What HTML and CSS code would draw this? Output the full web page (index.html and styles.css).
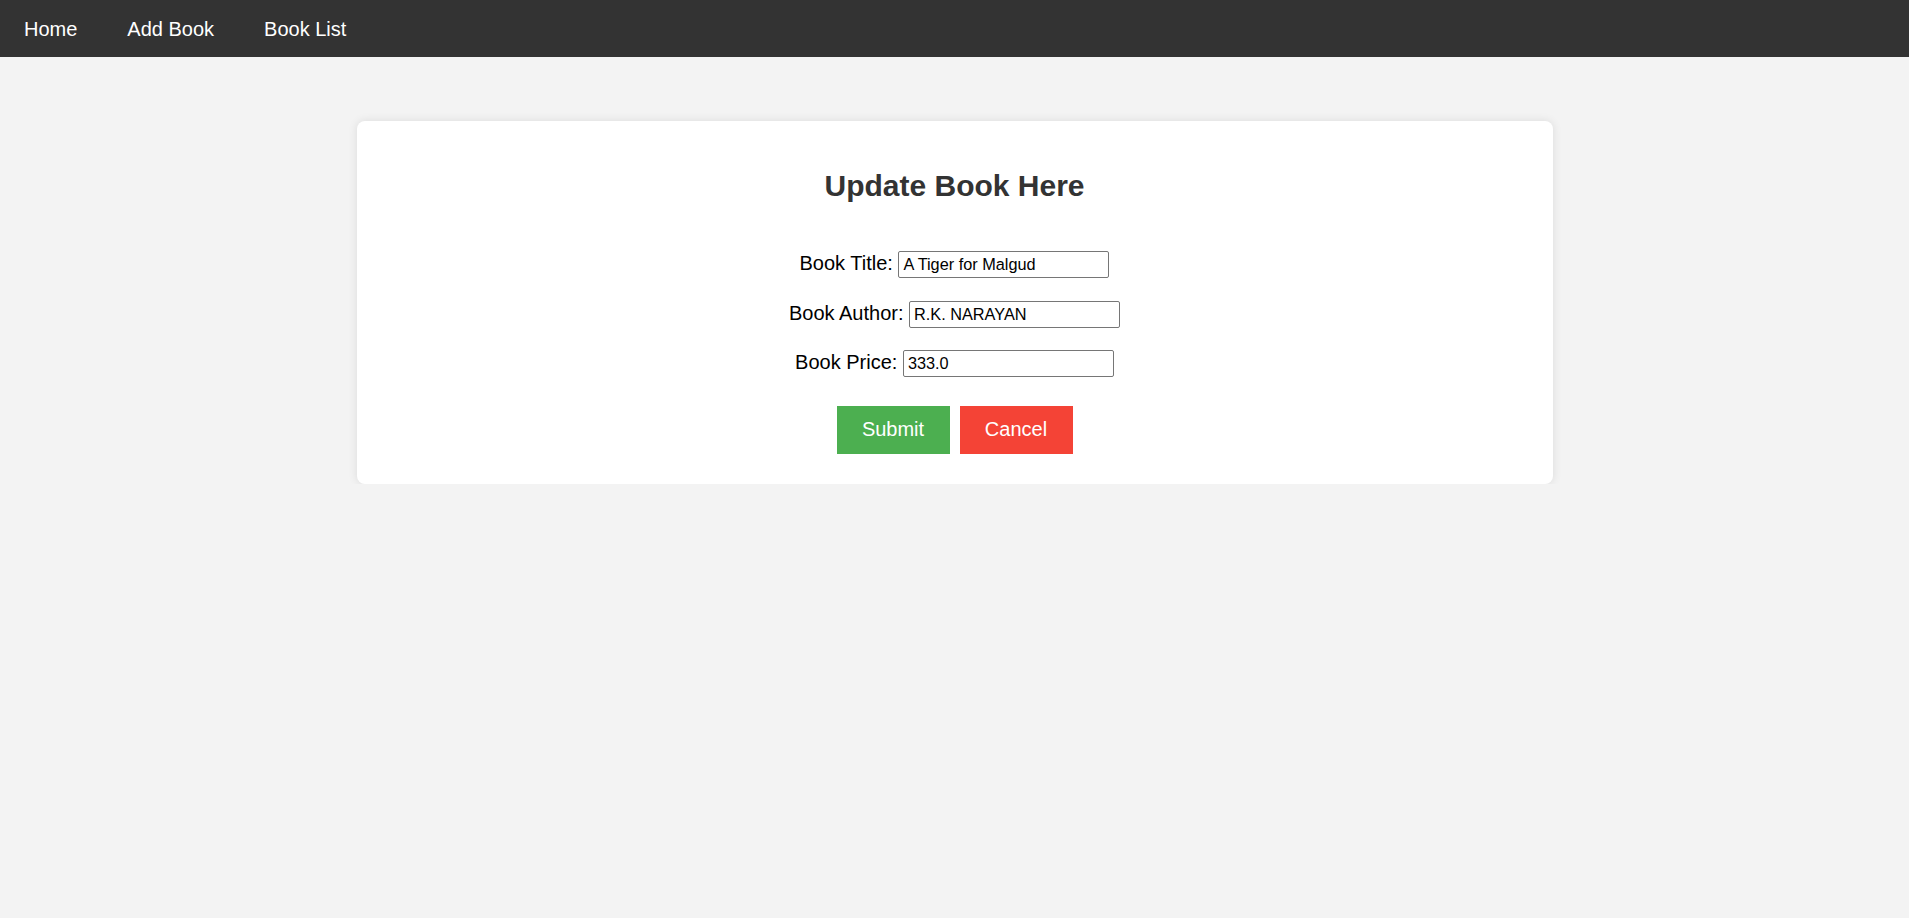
FILE: index.html
```html
<!DOCTYPE html>
<html>
<head>
<meta charset="utf-8">
<title>Update Book</title>
<link rel="stylesheet" href="styles.css">
</head>
<body>
<nav class="nav">
  <a href="#" class="nav-link">Home</a>
  <a href="#" class="nav-link">Add Book</a>
  <a href="#" class="nav-link">Book List</a>
</nav>
<main class="card">
  <h2 class="card-title">Update Book Here</h2>
  <form class="form">
    <div class="form-row"><label class="form-label">Book Title:</label> <input class="form-input" type="text" value="A Tiger for Malgud"></div>
    <div class="form-row"><label class="form-label">Book Author:</label> <input class="form-input" type="text" value="R.K. NARAYAN"></div>
    <div class="form-row"><label class="form-label">Book Price:</label> <input class="form-input" type="text" value="333.0"></div>
    <div class="form-actions">
      <button type="button" class="btn btn-submit">Submit</button>
      <button type="button" class="btn btn-cancel">Cancel</button>
    </div>
  </form>
</main>
</body>
</html>
```
FILE: styles.css
```css
body {
  margin: 0;
  background: #f3f3f3;
  font-family: "Liberation Sans", Arial, sans-serif;
}

.nav {
  background: #333333;
  height: 57px;
  box-sizing: border-box;
  padding-top: 2px;
  display: flex;
  align-items: center;
  gap: 50px;
  padding-left: 24px;
}

.nav-link {
  color: #ffffff;
  text-decoration: none;
  font-size: 20px;
  line-height: 23px;
}

.card {
  display: block;
  width: 1196px;
  box-sizing: border-box;
  margin: 64px auto 0;
  background: #ffffff;
  border-radius: 8px;
  box-shadow: 0 0 10px rgba(0, 0, 0, 0.1);
  padding: 48px 20px 30px;
  text-align: center;
}

.card-title {
  margin: 0 0 48px;
  font-size: 30px;
  font-weight: bold;
  line-height: 34px;
  color: #333333;
}

.form {
  margin: 0;
}

.form-row {
  font-size: 20px;
  line-height: 23px;
  color: #000000;
  margin-bottom: 23.3px;
  height: 26.4px;
}

.form-label {
  font-size: 20px;
}

.form-input {
  font-family: "Liberation Sans", Arial, sans-serif;
  font-size: 16.3px;
  width: 211px;
  box-sizing: border-box;
  padding: 3px 4px;
  border: 1px solid #767676;
  border-radius: 2px;
  color: #000000;
  background: #ffffff;
  vertical-align: baseline;
}

.form-actions {
  display: flex;
  justify-content: center;
  gap: 10px;
  padding-top: 5.5px;
}

.btn {
  font-family: "Liberation Sans", Arial, sans-serif;
  font-size: 20px;
  line-height: 22px;
  width: 113px;
  height: 48px;
  padding: 12px 0 14px;
  border: none;
  color: #ffffff;
  cursor: pointer;
}

.btn-submit {
  background: #4caf50;
}

.btn-cancel {
  background: #f44336;
}
```
